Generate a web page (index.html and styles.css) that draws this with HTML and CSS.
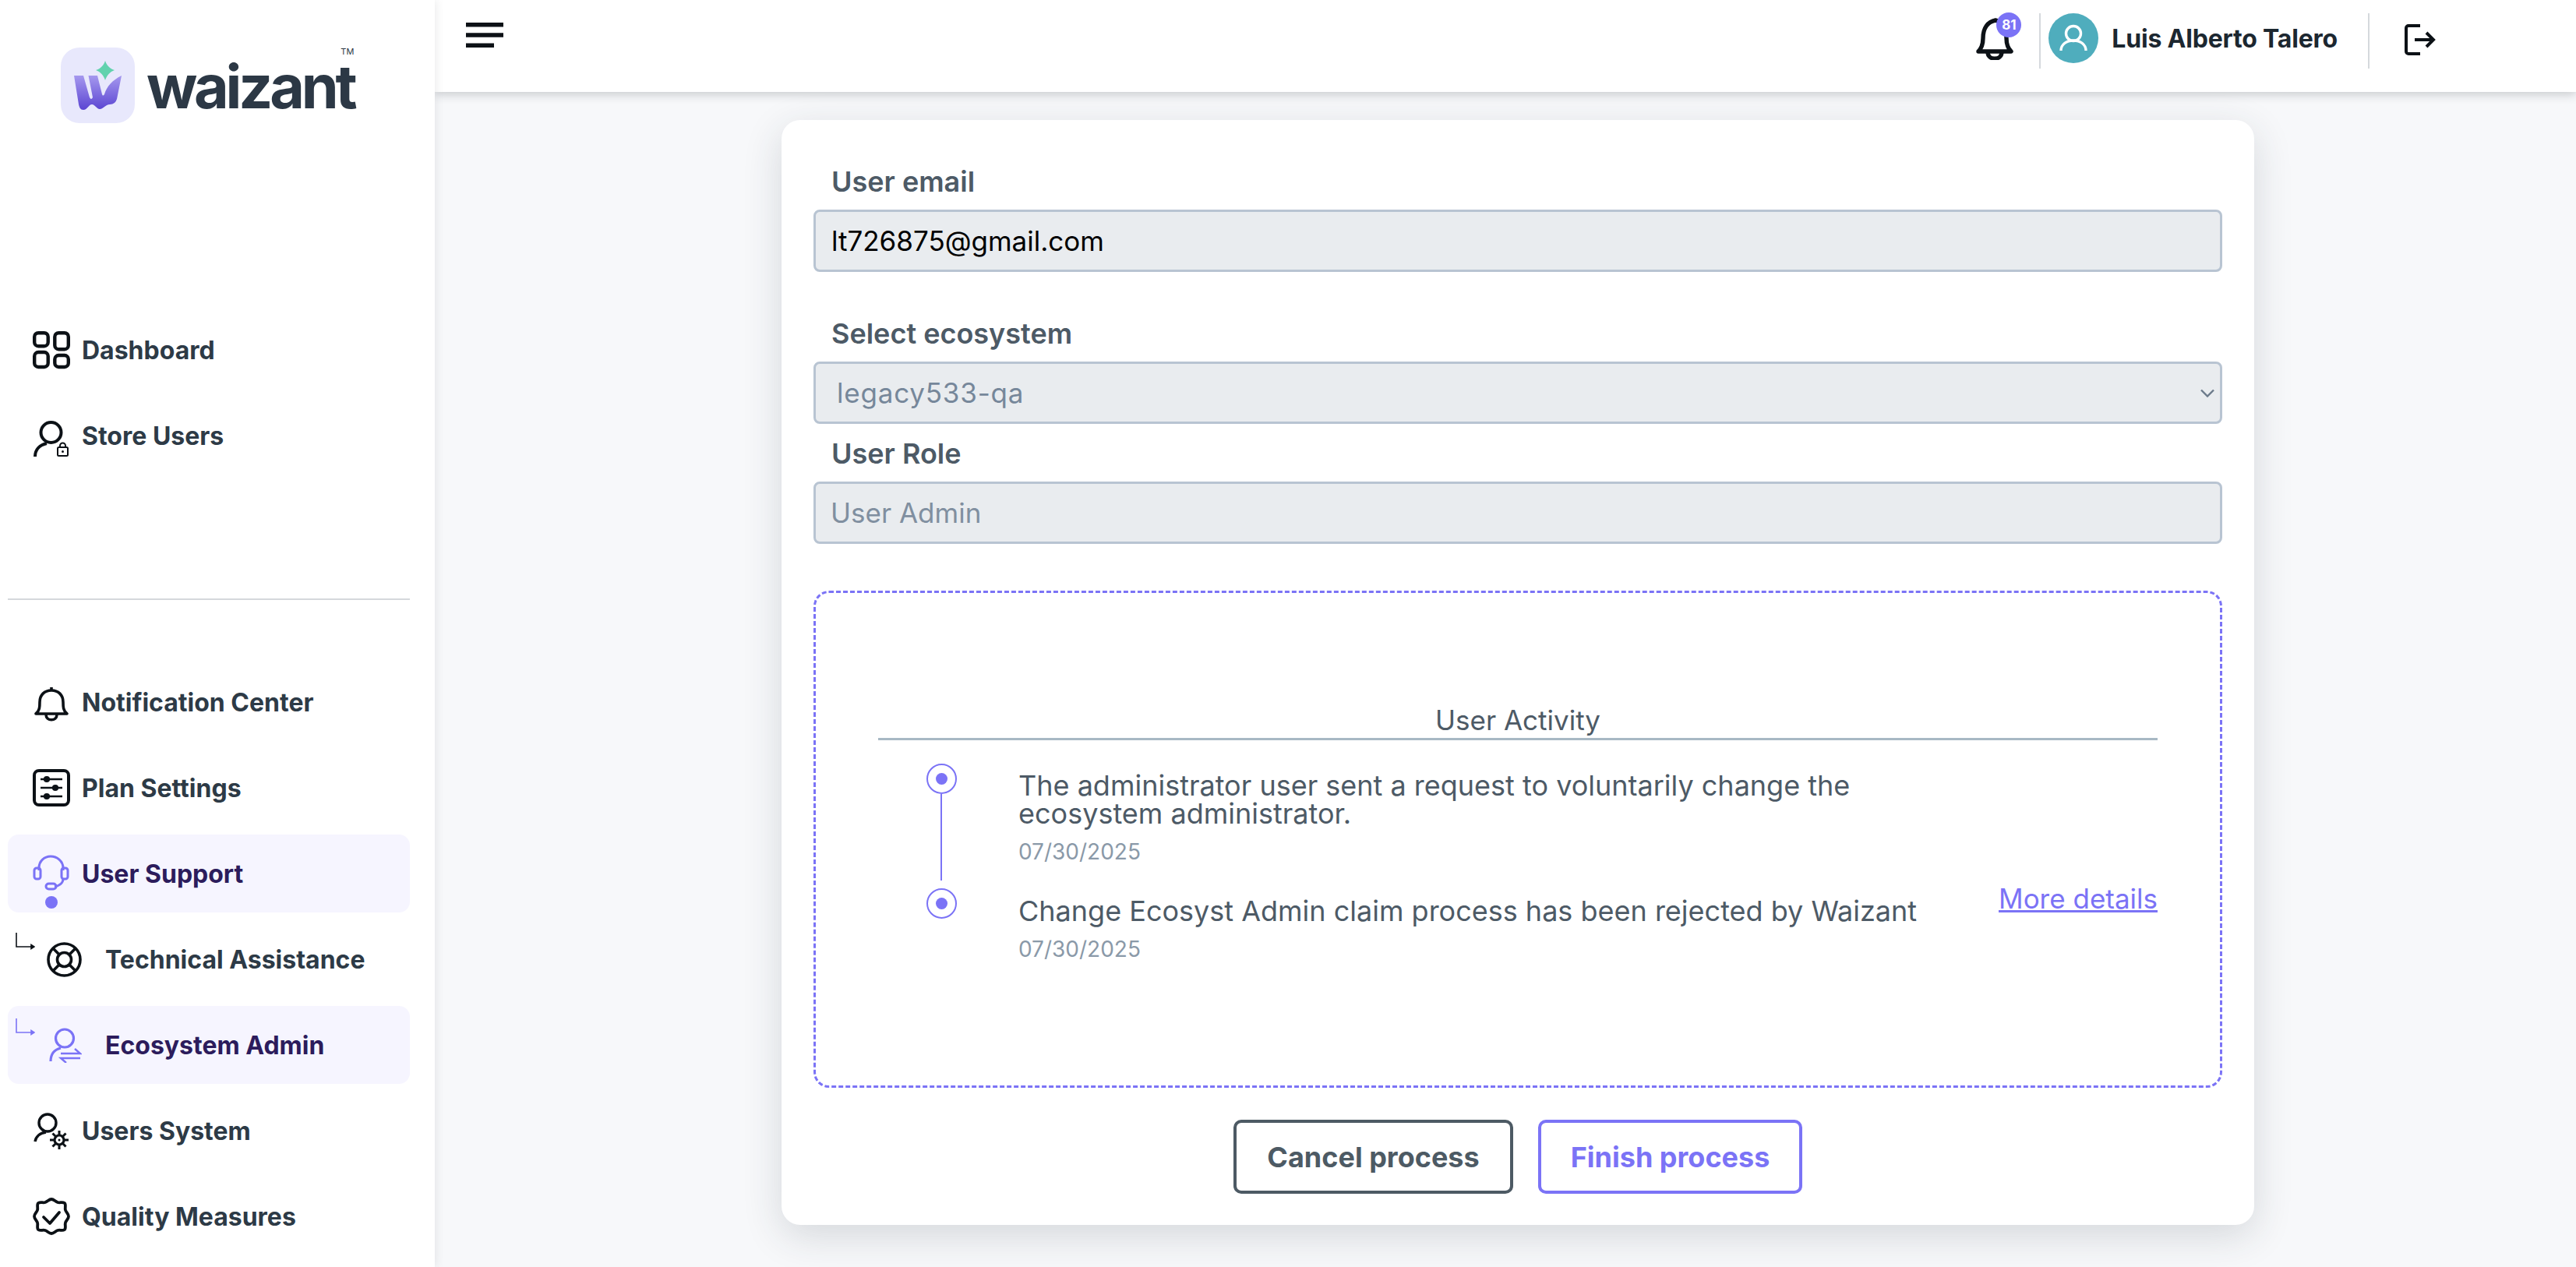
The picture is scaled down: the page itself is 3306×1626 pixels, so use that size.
FILE: index.html
```html
<!DOCTYPE html>
<html>
<head>
    <title>Waizant</title>
    <link rel="stylesheet" href="styles.css">
</head>
<body>
    <aside class="sidebar">
        <div class="logo">
            <svg class="logo-mark" viewBox="0 0 95 97">
                <defs>
                    <linearGradient id="wGrad" x1="0" y1="0" x2="0" y2="1">
                        <stop offset="0" stop-color="#a598ee"/>
                        <stop offset="1" stop-color="#5b45d2"/>
                    </linearGradient>
                </defs>
                <rect width="95" height="97" rx="24" fill="#e8e8fc"/>
                <path d="M17 36H29L37 64Q39 68 41 64L35.5 36H47L53 60Q54 63 56 60C59 50 66 42 78 36L72 66Q70 73 63 73C57 73 55 79 50 79C46 79 44 73 40 73C36 73 34 80 29 80C25 80 24 77 23 73Z" fill="url(#wGrad)"/>
                <path d="M57 17c2 6 6 10 12 12-6 2-10 7-12 13-2-6-6-11-12-13 6-2 10-6 12-12z" fill="#61d2ae"/>
            </svg>
            <span class="logo-text">waizant<sup class="tm">TM</sup></span>
        </div>

        <nav class="nav-top">
            <a class="nav-item">
                <svg class="nav-icon" viewBox="0 0 48 48" fill="none" stroke="#0c1116" stroke-width="4.4">
                    <rect x="2.2" y="2.2" width="17.5" height="17" rx="5"/>
                    <rect x="28.3" y="2.2" width="17.5" height="21" rx="5"/>
                    <rect x="2.2" y="27" width="17.5" height="19" rx="5"/>
                    <rect x="28.3" y="31" width="17.5" height="15" rx="5"/>
                </svg>
                <span>Dashboard</span>
            </a>
            <a class="nav-item">
                <svg class="nav-icon" viewBox="0 0 48 48" fill="none" stroke="#0c1116" stroke-width="4">
                    <circle cx="23.5" cy="20" r="13"/>
                    <path d="M3 51C3 42 9 36 18 34"/>
                    <rect x="32" y="39" width="13" height="11" rx="1.5" stroke-width="2"/>
                    <path d="M35 39v-2a3.5 3.5 0 0 1 7 0v2" stroke-width="2"/>
                    <circle cx="38.5" cy="44.5" r="1.5" fill="#0c1116" stroke="none"/>
                </svg>
                <span>Store Users</span>
            </a>
        </nav>

        <hr class="nav-divider">

        <nav class="nav-bottom">
            <a class="nav-item">
                <svg class="nav-icon" viewBox="0 0 48 48" fill="none" stroke="#0c1116" stroke-width="3.6" stroke-linejoin="round">
                    <path d="M4 39c5-4 5-9 5-15 0-9 6-15 15-15s15 6 15 15c0 6 0 11 5 15z"/>
                    <path d="M17 40c0 9 14 9 14 0"/>
                    <path d="M24 9V5"/>
                </svg>
                <span>Notification Center</span>
            </a>
            <a class="nav-item">
                <svg class="nav-icon" viewBox="0 0 48 48" fill="none" stroke="#0c1116" stroke-width="3">
                    <rect x="2" y="2" width="44" height="44" rx="6" stroke-width="4"/>
                    <path d="M10 13h28M10 24h28M10 35h28" stroke-width="2.4"/>
                    <circle cx="18" cy="13" r="2.6" fill="#0c1116"/>
                    <circle cx="29" cy="24" r="2.6" fill="#0c1116"/>
                    <circle cx="18" cy="35" r="2.6" fill="#0c1116"/>
                </svg>
                <span>Plan Settings</span>
            </a>
            <a class="nav-item active has-dot">
                <svg class="nav-icon" viewBox="0 0 48 48" fill="none" stroke="#7b73f6" stroke-width="3">
                    <path d="M8 20v-3c0-9 7-15 15-15s16 6 16 15v3"/>
                    <rect x="2" y="17" width="8" height="14" rx="3"/>
                    <rect x="37" y="17" width="8" height="14" rx="3"/>
                    <path d="M39 31c0 6-6 9-11 10"/>
                    <rect x="17" y="37" width="13" height="7" rx="3.5"/>
                </svg>
                <span>User Support</span>
            </a>
            <a class="nav-item sub">
                <svg class="sub-arrow" viewBox="0 0 25 22" fill="none" stroke="#0c1116" stroke-width="1.6">
                    <path d="M1 0v18h20"/>
                    <path d="M20 15.5l4 2.5-4 2.5z" fill="#0c1116"/>
                </svg>
                <svg class="sub-icon" viewBox="0 0 45 45" fill="none" stroke="#0c1116" stroke-width="3.6">
                    <circle cx="22.5" cy="22.5" r="20.5"/>
                    <circle cx="22.5" cy="22.5" r="9"/>
                    <path d="M8 8l8 8M37 8l-8 8M8 37l8-8M37 37l-8-8"/>
                </svg>
                <span>Technical Assistance</span>
            </a>
            <a class="nav-item sub active">
                <svg class="sub-arrow" viewBox="0 0 25 22" fill="none" stroke="#7b73f6" stroke-width="1.6">
                    <path d="M1 0v18h20"/>
                    <path d="M20 15.5l4 2.5-4 2.5z" fill="#7b73f6"/>
                </svg>
                <svg class="sub-icon" viewBox="0 0 45 45" fill="none" stroke="#7b73f6" stroke-width="3.2">
                    <circle cx="23" cy="13.5" r="11.5"/>
                    <path d="M5 43c0-9 5-15 13-17"/>
                    <path d="M18 33h25l-7-6M43 39H18l7 6" stroke-width="2.4"/>
                </svg>
                <span>Ecosystem Admin</span>
            </a>
            <a class="nav-item">
                <svg class="nav-icon" viewBox="0 0 48 48" fill="none" stroke="#0c1116" stroke-width="3.4">
                    <circle cx="19" cy="14" r="11"/>
                    <path d="M3 38C4 32 9 27 17 26"/>
                    <circle cx="34" cy="36" r="6" stroke-width="3.2"/>
                    <circle cx="34" cy="36" r="1.5" fill="#0c1116" stroke="none"/>
                    <path d="M34 24v6M34 42v6M22 36h6M40 36h6M25.5 27.5l4 4M38.5 40.5l4 4M42.5 27.5l-4 4M29.5 40.5l-4 4" stroke-width="3"/>
                </svg>
                <span>Users System</span>
            </a>
            <a class="nav-item">
                <svg class="nav-icon" viewBox="0 0 48 48" fill="none" stroke="#0c1116" stroke-width="3.8" stroke-linejoin="round">
                    <path d="M24 2C27 2 29 5 32 6C35 7 38 5 41 7C43 9 41 13 42 16C43 19 46 21 46 24C46 27 43 29 42 32C41 35 43 39 41 41C38 43 35 41 32 42C29 43 27 46 24 46C21 46 19 43 16 42C13 41 10 43 7 41C5 39 7 35 6 32C5 29 2 27 2 24C2 21 5 19 6 16C7 13 5 9 7 7C10 5 13 7 16 6C19 5 21 2 24 2Z"/>
                    <path d="M14 25l8 8 12-14" stroke-linecap="round"/>
                </svg>
                <span>Quality Measures</span>
            </a>
        </nav>
    </aside>

    <div class="main">
        <header class="topbar">
            <svg class="menu-icon" viewBox="0 0 48 32" fill="none" stroke="#0c1116" stroke-width="5.4">
                <path d="M0 2.7h48M0 16h48M0 29.300h36"/>
            </svg>
            <div class="topbar-right">
                <div class="bell">
                    <svg class="bell-icon" viewBox="0 0 48 54" fill="none" stroke="#0c1116" stroke-width="5.4" stroke-linejoin="round">
                        <path d="M3 43c5-5 6-10 6-17C9 13 15 5 25 3c9 2 14 10 14 23 0 7 1 12 6 17z"/>
                        <path d="M15 44c0 11 18 11 18 0"/>
                    </svg>
                    <span class="badge">81</span>
                </div>
                <div class="user">
                    <span class="avatar">
                        <svg viewBox="0 0 64 64" fill="none" stroke="#fff" stroke-width="3.4">
                            <circle cx="32" cy="26" r="9.500"/>
                            <path d="M16 48c0-8 7-13 16-13s16 5 16 13"/>
                        </svg>
                    </span>
                    <span class="user-name">Luis Alberto Talero</span>
                </div>
                <a class="logout">
                    <svg viewBox="0 0 40 40" fill="none" stroke="#0c1116" stroke-width="4">
                        <path d="M20 2H5a3 3 0 0 0-3 3v30a3 3 0 0 0 3 3h15"/>
                        <path d="M13 20h24M28 11l9 9-9 9"/>
                    </svg>
                </a>
            </div>
        </header>

        <section class="card">
            <label class="field-label first">User email</label>
            <div class="field field-email">lt726875@gmail.com</div>

            <label class="field-label eco">Select ecosystem</label>
            <div class="field field-select">
                <span>legacy533-qa</span>
                <svg class="chevron" viewBox="0 0 18 11" fill="none" stroke="#6b7a8a" stroke-width="2.4">
                    <path d="M1 1.500l8 8 8-8"/>
                </svg>
            </div>

            <label class="field-label role">User Role</label>
            <div class="field field-role">User Admin</div>

            <div class="activity">
                <h3 class="activity-title">User Activity</h3>
                <div class="timeline">
                    <div class="step first-step">
                        <div class="step-mark"><span class="ring"></span><span class="stem"></span></div>
                        <div class="step-body">
                            <p class="step-text">The administrator user sent a request to voluntarily change the ecosystem administrator.</p>
                            <p class="step-date">07/30/2025</p>
                        </div>
                    </div>
                    <div class="step">
                        <div class="step-mark"><span class="ring"></span></div>
                        <div class="step-body">
                            <p class="step-text">Change Ecosyst Admin claim process has been rejected by Waizant</p>
                            <p class="step-date">07/30/2025</p>
                        </div>
                        <a class="more-link">More details</a>
                    </div>
                </div>
            </div>

            <div class="actions">
                <button class="btn btn-cancel">Cancel process</button>
                <button class="btn btn-finish">Finish process</button>
            </div>
        </section>
    </div>
</body>
</html>
```

FILE: styles.css
```css
* {
    box-sizing: border-box;
}

html, body {
    margin: 0;
    height: 1626px;
    overflow: hidden;
}

body {
    display: flex;
    font-family: Inter, "Liberation Sans", sans-serif;
    background-color: #f7f8fa;
    color: #2d3a46;
}

p, h3 {
    margin: 0;
}

/* sidebar */
.sidebar {
    width: 558px;
    flex-shrink: 0;
    height: 1626px;
    padding: 61px 32px 0 10px;
    background-color: #fff;
    box-shadow: 0 0 12px rgba(40, 50, 60, 0.12);
    position: relative;
    z-index: 2;
}

.logo {
    display: flex;
    align-items: flex-start;
    gap: 15px;
    margin-left: 68px;
    height: 97px;
}

.logo-mark {
    width: 95px;
    height: 97px;
    flex-shrink: 0;
}

.logo-text {
    position: relative;
    margin-top: 5px;
    font-weight: 700;
    font-size: 77px;
    line-height: 90px;
    letter-spacing: -4.2px;
    color: #2c3845;
}

.tm {
    position: absolute;
    top: -5px;
    right: 0;
    font-size: 11px;
    line-height: 11px;
    letter-spacing: 0;
    font-weight: 400;
}

.nav-top {
    margin-top: 241px;
    display: flex;
    flex-direction: column;
    gap: 10px;
}

.nav-divider {
    margin: 159px 0 81px;
    border: 0;
    height: 2px;
    background-color: #d5d8dc;
}

.nav-bottom {
    display: flex;
    flex-direction: column;
    gap: 10px;
}

.nav-item {
    position: relative;
    display: flex;
    align-items: center;
    gap: 15px;
    height: 100px;
    padding-left: 32px;
    border-radius: 14px;
    font-size: 32px;
    font-weight: 700;
    color: #2d3a46;
}

.nav-item.active {
    background-color: #f6f5ff;
    color: #2c1c5c;
}

.nav-icon {
    width: 48px;
    height: 48px;
    flex-shrink: 0;
    overflow: visible;
}

.nav-item.has-dot::after {
    content: "";
    position: absolute;
    left: 48px;
    top: 79px;
    width: 16px;
    height: 16px;
    border-radius: 50%;
    background-color: #7b73f6;
}

.nav-item.sub {
    padding-left: 50px;
    gap: 30px;
}

.sub-arrow {
    position: absolute;
    left: 10px;
    top: 16px;
    width: 25px;
    height: 22px;
}

.sub-icon {
    width: 45px;
    height: 45px;
    flex-shrink: 0;
}

/* main column */
.main {
    flex: 1;
    min-width: 0;
}

.topbar {
    display: flex;
    justify-content: space-between;
    height: 118px;
    padding: 29px 180px 0 40px;
    background-color: #fff;
    box-shadow: 0 3px 12px rgba(40, 50, 60, 0.24);
}

.menu-icon {
    width: 48px;
    height: 32px;
}

.topbar-right {
    display: flex;
    align-items: flex-start;
    margin-top: -12px;
}

.bell {
    position: relative;
    width: 83px;
    height: 71px;
    border-right: 2px solid #d5d9dd;
}

.bell-icon {
    position: absolute;
    left: 0;
    top: 6px;
    width: 48px;
    height: 54px;
}

.badge {
    position: absolute;
    left: 26px;
    top: -1px;
    width: 32px;
    height: 32px;
    border-radius: 50%;
    background-color: #7b73f6;
    color: #fff;
    font-size: 17px;
    font-weight: 700;
    line-height: 32px;
    text-align: center;
}

.user {
    display: flex;
    align-items: flex-start;
    gap: 17px;
    height: 71px;
    padding: 0 39px 0 10px;
    border-right: 2px solid #d5d9dd;
}

.avatar {
    width: 64px;
    height: 64px;
    border-radius: 50%;
    background-color: #4fadbd;
}

.avatar svg {
    display: block;
}

.user-name {
    margin-top: 14px;
    font-size: 32px;
    line-height: 38px;
    font-weight: 700;
    letter-spacing: -0.2px;
    color: #1c2730;
    white-space: nowrap;
}

.logout {
    margin: 14px 0 0 45px;
    width: 40px;
    height: 40px;
}

.logout svg {
    display: block;
}

/* card */
.card {
    width: 1890px;
    height: 1418px;
    margin: 36px 0 0 445px;
    padding: 58px 41px 0;
    background-color: #fff;
    border-radius: 24px;
    box-shadow: 0 14px 50px rgba(40, 50, 60, 0.16);
}

.field-label {
    display: block;
    padding-left: 23px;
    font-size: 36px;
    line-height: 42px;
    font-weight: 600;
    color: #4d5a66;
}

.field-label.eco {
    margin-top: 58px;
}

.field-label.role {
    margin-top: 17px;
}

.field {
    display: flex;
    align-items: center;
    justify-content: space-between;
    height: 80px;
    margin-top: 15px;
    padding: 0 20px;
    background-color: #e9ecef;
    border: 3px solid #b8c4d2;
    border-radius: 8px;
    font-size: 35px;
}

.field-email {
    color: #000;
}

.field-select {
    padding-left: 27px;
    letter-spacing: 0.8px;
    color: #76879a;
}

.field-role {
    padding-left: 19px;
    color: #808fa0;
}

.chevron {
    width: 18px;
    height: 11px;
    margin-right: -13px;
}

.activity {
    height: 638px;
    margin-top: 60px;
    padding: 142px 80px 0;
    border: 3px dashed #7b73f6;
    border-radius: 20px;
}

.activity-title {
    height: 47px;
    border-bottom: 3px solid #a8b8c4;
    font-size: 35px;
    line-height: 42px;
    font-weight: 400;
    color: #4d5a66;
    text-align: center;
}

.step {
    display: flex;
    gap: 79px;
}

.first-step {
    height: 160px;
    margin-top: 30px;
}

.step-mark {
    position: relative;
    flex-shrink: 0;
    width: 39px;
    margin-left: 62px;
}

.ring {
    display: flex;
    align-items: center;
    justify-content: center;
    width: 39px;
    height: 39px;
    border: 2px solid #7b73f6;
    border-radius: 50%;
}

.ring::after {
    content: "";
    width: 15px;
    height: 15px;
    border-radius: 50%;
    background-color: #7b73f6;
}

.stem {
    display: block;
    width: 2px;
    height: 111px;
    margin-left: 18px;
    background-color: #7b73f6;
}

.step-body {
    flex: 1;
}

.first-step .step-text {
    max-width: 1100px;
    margin-top: 10px;
}

.step-text {
    margin-top: 11px;
    font-size: 36px;
    line-height: 36px;
    color: #4d5a66;
}

.step-date {
    margin-top: 14px;
    font-size: 28px;
    line-height: 34px;
    color: #8a99a8;
}

.more-link {
    align-self: flex-start;
    margin-top: -8px;
    font-size: 35px;
    line-height: 42px;
    color: #7b73f6;
    text-decoration: underline;
}

.actions {
    display: flex;
    justify-content: center;
    gap: 32px;
    margin-top: 41px;
}

.btn {
    height: 95px;
    padding: 0;
    background-color: #fff;
    border-radius: 10px;
    font-family: inherit;
    font-size: 36px;
    font-weight: 700;
}

.btn-cancel {
    width: 359px;
    border: 4px solid #4d5a64;
    color: #4d5a64;
}

.btn-finish {
    width: 339px;
    border: 4px solid #7b73f6;
    color: #7b73f6;
}
```
